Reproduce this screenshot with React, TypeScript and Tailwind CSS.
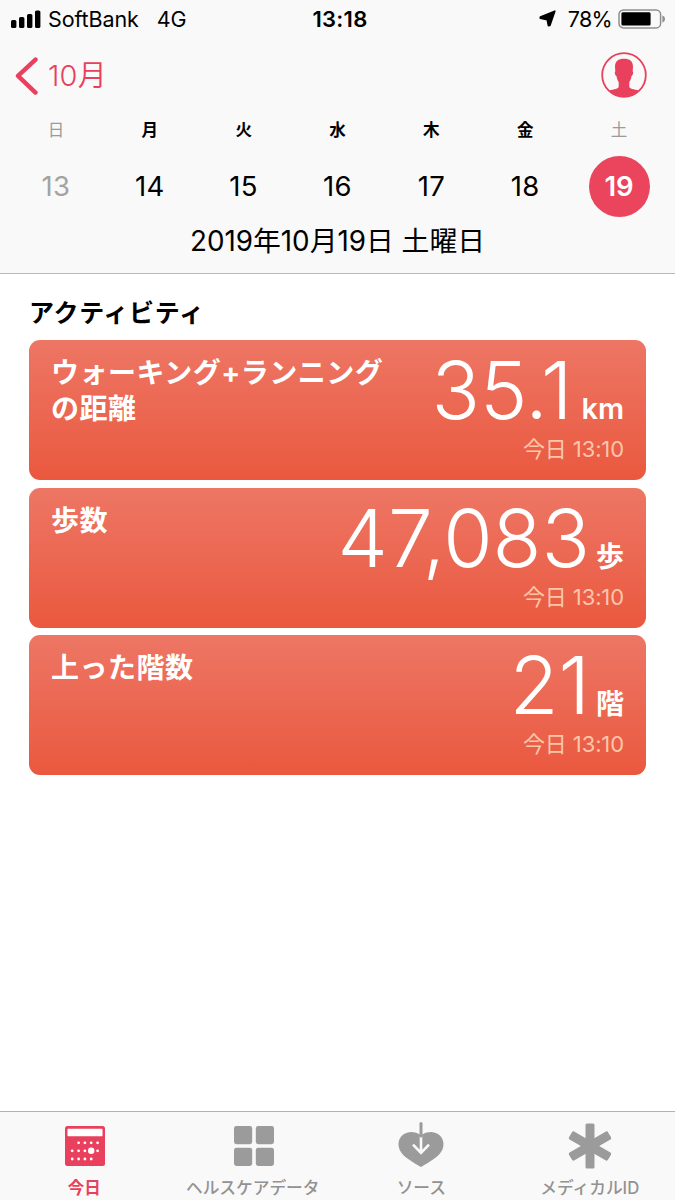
type Day = {
  label: string;
  date: number;
};

type Activity = {
  title: string;
  value: string;
  unit: string;
  time: string;
};

const days: Day[] = [
  { label: "日", date: 13 },
  { label: "月", date: 14 },
  { label: "火", date: 15 },
  { label: "水", date: 16 },
  { label: "木", date: 17 },
  { label: "金", date: 18 },
  { label: "土", date: 19 },
];

const selectedDate = 19;

const activities: Activity[] = [
  { title: "ウォーキング+ランニングの距離", value: "35.1", unit: "km", time: "今日 13:10" },
  { title: "歩数", value: "47,083", unit: "歩", time: "今日 13:10" },
  { title: "上った階数", value: "21", unit: "階", time: "今日 13:10" },
];

function StatusBar() {
  return (
    <div className="grid h-[38px] grid-cols-3 items-center pl-[11px] pr-[9px] text-[21.5px] leading-[38px] text-black">
      <div className="flex items-center">
        <svg width="31" height="18" viewBox="0 0 31 18" className="-mt-px shrink-0">
          <rect x="0" y="10" width="5.4" height="8" rx="1.6" />
          <rect x="8" y="7" width="5.4" height="11" rx="1.6" />
          <rect x="16" y="4" width="5.4" height="14" rx="1.6" />
          <rect x="24" y="0.5" width="5.4" height="17.5" rx="1.6" />
        </svg>
        <span className="ml-[6px] tracking-[-0.1px]">SoftBank</span>
        <span className="ml-[18px] tracking-[-0.2px]">4G</span>
      </div>
      <div className="pl-[3px] text-center text-[22px] font-semibold tracking-[0.3px]">13:18</div>
      <div className="flex items-center justify-end">
        <svg width="17" height="17" viewBox="0 0 17 17" className="-mt-px mr-[12px] shrink-0">
          <path d="M15.8 1.2 10.9 15.4 9.4 15.600 8.200 9.700 1.200 8.200 1.400 6.900z" stroke="#000" strokeWidth="1.6" strokeLinejoin="round" />
        </svg>
        <span className="tracking-[-0.7px]">78%</span>
        <svg width="48" height="20" viewBox="0 0 48 20" className="-mt-px ml-[6px] shrink-0">
          <rect x="1" y="0.9" width="41.6" height="18" rx="4.5" fill="none" stroke="#8e8e8e" strokeWidth="1.5" />
          <rect x="3.4" y="3.2" width="29.2" height="13.4" rx="1.5" />
          <path d="M44.4 6.4c3.4.8 3.4 6.2 0 7z" fill="#8e8e8e" />
        </svg>
      </div>
    </div>
  );
}

function Header() {
  return (
    <header className="h-[274px] border-b border-[#b9b9bb] bg-[#f9f9f9]">
      <StatusBar />
      <div className="flex h-[75px] items-center justify-between pl-[15px] pr-[28px] text-[#e9415d]">
        <div className="flex items-center">
          <svg width="23" height="38" viewBox="0 0 23 38" fill="none" stroke="currentColor" strokeWidth="4.4" strokeLinecap="round" strokeLinejoin="round">
            <path d="M20.5 2.6 3 18.8 20.5 35.6" />
          </svg>
          <span className="ml-[10px] text-[29px] font-[350] leading-[38px] tracking-[0.2px]">10月</span>
        </div>
        <svg width="46" height="46" viewBox="0 0 46 46" className="-mt-px">
          <circle cx="23" cy="23" r="21.8" fill="none" stroke="currentColor" strokeWidth="1.8" />
          <path
            d="M23 6.8c-5.800 0-9 2.600-9 8l.3 4.600c-.9.2-.5 3.800 1.200 4.600.4 3 1.200 4.600 2.200 6v4.200c0 2.800-4.600 3-9.600 4.200A22 22 0 0 0 23 45a22 22 0 0 0 14.900-6.600c-5-1.200-9.600-1.400-9.600-4.200V30c1-1.400 1.800-3 2.200-6 1.700-.8 2.100-4.400 1.200-4.600l.3-4.600c0-5.400-3.200-8-9-8z"
            fill="currentColor"
          />
        </svg>
      </div>
      <div className="grid grid-cols-7 pl-[9px] pr-[9px]">
        {days.map((day, i) => {
          const weekend = i === 0 || i === 6;
          const selected = day.date === selectedDate;
          return (
            <div key={day.date} className="flex flex-col items-center">
              <span className={weekend ? "text-[16.5px] leading-[34px] text-[#9b9b9b]" : "text-[16.5px] font-bold leading-[34px] text-black"}>
                {day.label}
              </span>
              <span
                className={
                  selected
                    ? "mt-[9px] flex size-[61px] items-center justify-center rounded-full bg-[#eb445d] text-[27.5px] font-semibold text-white"
                    : weekend
                      ? "mt-[9px] flex size-[61px] items-center justify-center text-[27.5px] tracking-[0.3px] text-[#a3a3a3]"
                      : "mt-[9px] flex size-[61px] items-center justify-center text-[27.5px] tracking-[0.3px] text-black"
                }
              >
                {day.date}
              </span>
            </div>
          );
        })}
      </div>
      <div className="mt-[4px] text-center text-[27.8px] leading-[40px] text-black">2019年10月19日 土曜日</div>
    </header>
  );
}

function ActivityCard({ title, value, unit, time }: Activity) {
  return (
    <li className="flex h-[140px] justify-between rounded-[11px] bg-linear-to-b from-[#ed7664] to-[#ea583e] px-[22px] text-white">
      <h3 className="w-[345px] shrink-0 pt-[15px] text-[28px] font-bold leading-[36px] tracking-[0.5px]">{title}</h3>
      <div className="-ml-[100px] flex flex-col items-end">
        <p className="flex h-[93px] items-baseline whitespace-nowrap">
          <span className="text-[80px] font-light leading-[99px]">{value}</span>
          <span className={unit === "km" ? "ml-[9px] text-[29px] font-semibold" : "ml-[6px] text-[28px] font-bold"}>{unit}</span>
        </p>
        <p className="text-[22px] leading-[32px] tracking-[-0.1px] text-[#fbc6a9]">{time}</p>
      </div>
    </li>
  );
}

function TodayIcon() {
  return (
    <svg width="40" height="40" viewBox="0 0 40 40" className="ml-px">
      <rect width="40" height="40" rx="2.5" fill="#e9415d" />
      <rect x="2.5" y="2.8" width="35" height="7.4" rx="0.6" fill="#fff" />
      <g fill="#fff">
        {[13.6, 19.9, 26.2, 32.6].map((x) => (
          <circle key={x} cx={x} cy="16.8" r="1.4" />
        ))}
        {[7.2, 13.6, 19.9, 32.6].map((x) => (
          <circle key={x} cx={x} cy="24.8" r="1.4" />
        ))}
        <circle cx="26.2" cy="24.8" r="3.2" />
        {[7.2, 13.6, 19.9, 26.2].map((x) => (
          <circle key={x} cx={x} cy="33" r="1.4" />
        ))}
      </g>
    </svg>
  );
}

function DataIcon() {
  return (
    <svg width="40" height="40" viewBox="0 0 40 40" fill="#9b9b9b" className="ml-[2px]">
      <rect width="18.2" height="18.2" rx="2.4" />
      <rect x="21.8" width="18.2" height="18.2" rx="2.4" />
      <rect y="21.8" width="18.2" height="18.2" rx="2.4" />
      <rect x="21.8" y="21.8" width="18.2" height="18.2" rx="2.4" />
    </svg>
  );
}

function SourceIcon() {
  return (
    <svg width="46" height="46" viewBox="0 0 46 46" className="-mt-[4px]">
      <path
        d="M23 13.5C20.500 11 16.500 10 12.500 10 5.500 10.500.5 15.500.5 22c0 11.500 13 17 22.500 23C32.500 39 45.500 33.500 45.500 22c0-6.500-5-11.500-12-12-4 0-8 1-10.500 3.500z"
        fill="#9b9b9b"
      />
      <path d="M23 14v16.5M15 22.700l8 8.300 8-8.300" fill="none" stroke="#f9f9f9" strokeWidth="2.6" />
      <path d="M23 1.6v12.400" stroke="#9b9b9b" strokeWidth="3" strokeLinecap="round" />
    </svg>
  );
}

function MedicalIcon() {
  return (
    <svg width="44" height="46" viewBox="0 0 44 46" fill="#9b9b9b" className="-mt-[3px]">
      {[0, 60, 120].map((angle) => (
        <rect key={angle} x="17.5" y="0.5" width="9" height="45" rx="1.5" transform={`rotate(${angle} 22 23)`} />
      ))}
    </svg>
  );
}

const tabs = [
  { label: "今日", icon: <TodayIcon />, active: true },
  { label: "ヘルスケアデータ", icon: <DataIcon />, active: false },
  { label: "ソース", icon: <SourceIcon />, active: false },
  { label: "メディカルID", icon: <MedicalIcon />, active: false },
];

function TabBar() {
  return (
    <nav className="grid h-[89px] grid-cols-4 border-t border-[#b2b2b4] bg-[#f9f9f9] pr-px">
      {tabs.map((tab) => (
        <button key={tab.label} type="button" className="flex flex-col items-center pt-[14px]">
          <span className="flex h-[47px] items-start justify-center">{tab.icon}</span>
          <span
            className={
              tab.active
                ? "text-[16.5px] font-bold leading-[30px] text-[#e9415d]"
                : "text-[16.7px] font-medium leading-[30px] text-[#929292]"
            }
          >
            {tab.label}
          </span>
        </button>
      ))}
    </nav>
  );
}

export default function App() {
  return (
    <div className="flex h-[1200px] w-[675px] flex-col overflow-hidden bg-white font-['Inter','Noto_Sans_CJK_JP',sans-serif]">
      <Header />
      <main className="flex-1 px-[29px] pt-[20px]">
        <h2 className="text-[25px] font-bold leading-[38px] tracking-[0.7px] text-black">アクティビティ</h2>
        <ul className="mt-[8px] flex flex-col gap-[7.5px]">
          {activities.map((activity) => (
            <ActivityCard key={activity.title} {...activity} />
          ))}
        </ul>
      </main>
      <TabBar />
    </div>
  );
}
